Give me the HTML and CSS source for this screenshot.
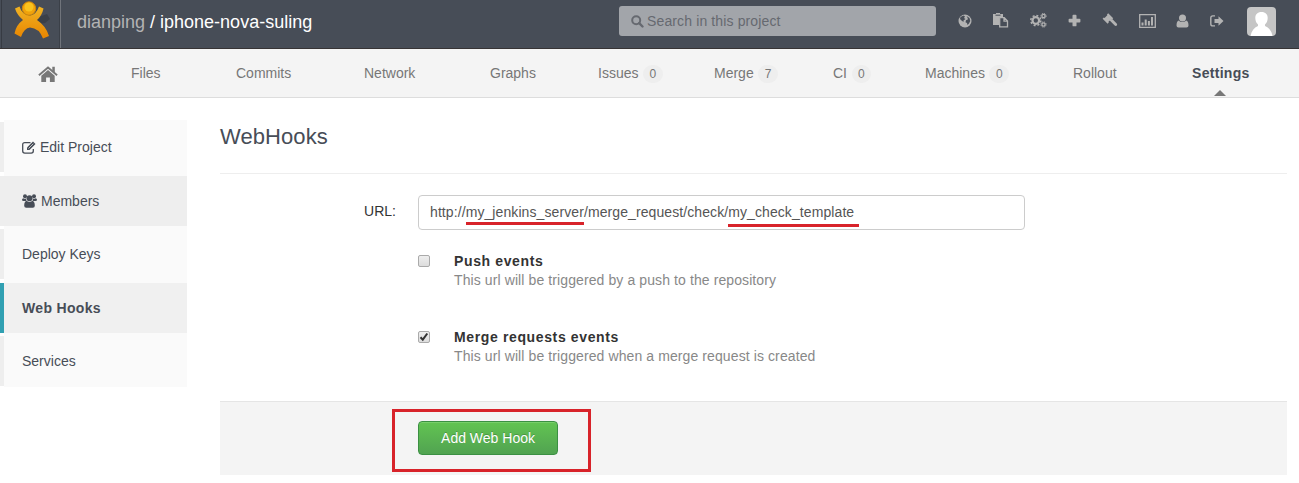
FILE: index.html
```html
<!DOCTYPE html>
<html lang="en">
<head>
<meta charset="utf-8">
<title>WebHooks</title>
<link rel="stylesheet" href="styles.css">
</head>
<body>
<header class="topbar">
  <a class="logo">
    <svg width="48" height="42" viewBox="0 0 48 42">
      <defs><linearGradient id="g" x1="0" y1="0" x2="0" y2="1"><stop offset="0" stop-color="#f0b323"/><stop offset="1" stop-color="#e88500"/></linearGradient></defs>
      <path d="M29 18l11-4 3 5-5 4-8 1z" fill="#343941" opacity=".65"/>
      <path d="M8 8.500l4.500-2Q15 15 23 15.500Q29 15 32 6.500l4.500 2Q35 15.500 30 20Q39 26 42 36l-6 2.500Q32 28 23 27.500Q17 28 14 37L7.500 33.500Q9 25 16 20Q10 15 8 8.500z" fill="url(#g)"/>
      <circle cx="22" cy="8.500" r="6.700" fill="#f0a20c" stroke="#cf8608"/>
      <circle cx="22" cy="7" r="4.500" fill="#f9c21d"/>
    </svg>
  </a>
  <h1 class="title"><span class="group">dianping</span> / iphone-nova-suling</h1>
  <div class="search">
    <svg width="13" height="13" viewBox="0 0 13 13"><circle cx="5.200" cy="5.200" r="4" fill="none" stroke="#666970" stroke-width="2"/><path d="M8.200 8.200l3.300 3.300" stroke="#666970" stroke-width="2.400" stroke-linecap="round"/></svg>
    <span>Search in this project</span>
  </div>
  <nav class="tools">
    <svg width="14" height="14" viewBox="0 0 14 14"><circle cx="7" cy="7" r="6.500" fill="#b3b3b3"/><path d="M2.500 3l3-1.500 1.500 1-1 1.500 1.500 1-2 1.500 0 1.500-2-1.500L2 5zM8.500 2l3 2 .8 3-1.300 2.500-1.500 1.500-.5-2-1.500-.8.500-2 2-1-.5-1.500z" fill="#474d57"/></svg>
    <svg width="16" height="15" viewBox="0 0 16 15"><path d="M0 1h3V0h4v1h3v3H6v8H0z" fill="#b3b3b3"/><path d="M2.500 2.200h5" stroke="#474d57"/><path d="M6.700 4.700h4.600l3.200 3.200v5.900H6.700zM11 4.700v3.500h3.500" fill="none" stroke="#b3b3b3" stroke-width="1.300"/></svg>
    <svg width="17" height="15" viewBox="0 0 17 15"><g fill="none" stroke="#b3b3b3"><circle cx="5.800" cy="7.500" r="3.300" stroke-width="2.200"/><circle cx="5.800" cy="7.500" r="5" stroke-width="1.500" stroke-dasharray="2 1.927"/><circle cx="13.500" cy="3" r="1.600" stroke-width="1.300"/><circle cx="13.500" cy="3" r="2.600" stroke-dasharray="1.200 .842"/><circle cx="13.500" cy="11.500" r="1.600" stroke-width="1.300"/><circle cx="13.500" cy="11.500" r="2.600" stroke-dasharray="1.200 .842"/></g></svg>
    <svg width="13" height="13" viewBox="0 0 13 13"><path d="M5.400.8h2.200q.9 0 .9.900v3h3q.9 0 .9.900v1.900q0 .9-.9.900h-3v3q0 .9-.9.900H5.400q-.9 0-.9-.9v-3h-3q-.9 0-.9-.9V5.600q0-.9.900-.9h3v-3q0-.9.900-.9z" fill="#b3b3b3"/></svg>
    <svg width="16" height="15" viewBox="0 0 16 15"><path d="M6.200.2l5 5-1.200 1.200-.8-.3-2.700 2.700.3.800-1.200 1.200-5-5 1.200-1.200.8.300 2.700-2.700-.3-.8zM7.700 7.600l2.100-2.100 4.900 4.900q1 1 0 2t-2 .1z" fill="#b3b3b3"/></svg>
    <svg width="17" height="14" viewBox="0 0 17 14"><path d="M.7.700h15.600v12.600H.7z" fill="none" stroke="#b3b3b3" stroke-width="1.300"/><path d="M2.500 8.500h2v3h-2zM5.700 5.500h2v6h-2zM8.900 7h2v4.500h-2zM12 3h2v8.500h-2z" fill="#b3b3b3"/></svg>
    <svg width="13" height="14" viewBox="0 0 13 14"><path d="M2.500 6.500Q6 9.500 10.500 6.500 12.500 7.500 12.500 11.500 12.500 13.500 10.500 13.500h-8Q.5 13.500.5 11.500.5 7.500 2.500 6.500z" fill="#b3b3b3"/><circle cx="6.500" cy="4" r="3.500" fill="#b3b3b3"/></svg>
    <svg width="14" height="12" viewBox="0 0 14 12"><path d="M5 .9H2.800Q.8.900.8 2.900v6q0 2 2 2H5" fill="none" stroke="#b3b3b3" stroke-width="1.400"/><path d="M4.500 4H8.500V1.200l5 4.700-5 4.800V8h-4z" fill="#b3b3b3"/></svg>
  </nav>
  <svg class="avatar" width="29" height="29" viewBox="0 0 29 29"><path d="M0 0h29v29H0z" fill="#c5c5c5"/><path d="M14.500 5c4 0 6.200 2.500 6.200 6 0 3-1.200 5.200-2.700 6.500v1.500c4 1.500 6.500 5 7.500 10h-22c1-5 3.500-8.500 7.500-10v-1.500C9.500 16.200 8.300 14 8.300 11c0-3.500 2.200-6 6.200-6z" fill="#fff"/></svg>
</header>
<nav class="mainnav">
  <a class="home"><svg width="20" height="17" viewBox="0 0 20 17"><path d="M.9 9.300L10 1.600l9.100 7.700" fill="none" stroke="#777" stroke-width="1.900"/><path d="M14.300.8h2.500v6l-2.500-2zM3.300 9.700L10 4l6.700 5.700V16h-4.800v-4.600H8.100V16H3.300z" fill="#777"/></svg></a>
  <a>Files</a>
  <a>Commits</a>
  <a>Network</a>
  <a>Graphs</a>
  <a>Issues<span class="count">0</span></a>
  <a>Merge<span class="count">7</span></a>
  <a>CI<span class="count">0</span></a>
  <a>Machines<span class="count">0</span></a>
  <a>Rollout</a>
  <a class="active">Settings</a>
</nav>
<main class="page">
  <ul class="side">
    <li><svg width="14" height="13" viewBox="0 0 14 13"><path d="M8.500 1.600H2.800Q.7 1.600.7 3.700v6.400q0 2.100 2.100 2.100h6.400q2.100 0 2.100-2.100V8" fill="none" stroke="#474d57" stroke-width="1.300"/><path d="M11 .5l2.500 2.500-6 6H5V6.500z" fill="#474d57"/><path d="M6.500 7.500l4.800-4.800" stroke="#fafafa" stroke-width=".7"/></svg><span>Edit Project</span></li>
    <li class="hover"><svg width="15" height="14" viewBox="0 0 15 14"><g fill="#474d57"><circle cx="3" cy="2.200" r="2"/><circle cx="12" cy="2.200" r="2"/><circle cx="7.500" cy="4.300" r="3"/><path d="M1.500 4.300Q3 5.300 4 4.500q0 1.500.7 2.500H1.500Q0 7 0 5.800T1.500 4.300zM13.500 4.300Q12 5.300 11 4.500q0 1.500-.7 2.500h3.200Q15 7 15 5.800t-1.500-1.500zM4.300 6.800q3.200 2.200 6.400 0Q12.800 7.700 12.800 11.700q0 2-2 2H4.200q-2 0-2-2 0-4 2.100-4.900z"/></g></svg><span>Members</span></li>
    <li>Deploy Keys</li>
    <li class="current">Web Hooks</li>
    <li>Services</li>
  </ul>
  <section class="content">
    <h3>WebHooks</h3>
    <form>
      <div class="url-row">
        <label>URL:</label>
        <div class="field">http://<span class="mark m1">my_jenkins_server</span>/merge_request/check/<span class="mark m2">my_check_template</span></div>
      </div>
      <div class="option">
        <span class="box"></span>
        <div><strong>Push events</strong><p>This url will be triggered by a push to the repository</p></div>
      </div>
      <div class="option">
        <span class="box"><svg width="10" height="10" viewBox="0 0 10 10"><path d="M1.500 5.200l2.300 2.500L8.300 1.500" fill="none" stroke="#333" stroke-width="2"/></svg></span>
        <div><strong>Merge requests events</strong><p>This url will be triggered when a merge request is created</p></div>
      </div>
      <div class="actions"><div class="callout"><span class="btn">Add Web Hook</span></div></div>
    </form>
  </section>
</main>
</body>
</html>
```
FILE: styles.css
```css
* { box-sizing: border-box; }
body { margin: 0; background: #fff; color: #333; font: 14px/20px "Liberation Sans", Arial, sans-serif; overflow: hidden; }
svg { display: block; flex: none; }
h1, h3, p, ul { margin: 0; padding: 0; }
.topbar { display: flex; height: 49px; background: #474d57; border-bottom: 1px solid #373435; }
.logo { width: 60px; height: 48px; margin-left: 1px; border-left: 1px solid #373b43; border-right: 1px solid #70747b; padding-left: 5px; box-shadow: inset -1px 0 #3b4048; }
.title { width: 558px; padding: 11px 0 0 16px; font-size: 18px; line-height: 22px; font-weight: normal; color: #fff; white-space: nowrap; }
.group { color: #b3b3b3; }
.search { display: flex; align-items: center; gap: 3px; width: 317px; height: 30px; margin-top: 6px; padding-left: 12px; border-radius: 3px; background: #a2a5aa; color: #666970; letter-spacing: .13px; }
.tools { display: grid; grid-template-columns: 35px 37px 38px 34px 37px 37px 34px 37px; align-items: center; height: 41px; margin-left: 22px; }
.avatar { margin-top: 7px; border-radius: 4px; }
.mainnav { display: grid; grid-template-columns: 93px 105px 128px 126px 108px 116px 119px 92px 148px 119px 107px; height: 49px; padding-left: 38px; background: #f4f4f4; border-bottom: 1px solid #ddd; color: #777; line-height: 48px; white-space: nowrap; }
.home { padding-top: 17px; }
.count { margin-left: 4.500px; padding: 2px 6.500px; border-radius: 9px; background: #eee; font-size: 12px; }
.active { position: relative; color: #474d57; font-weight: bold; letter-spacing: .3px; }
.active::after { content: ""; position: absolute; left: 22px; bottom: 2px; border: 6px solid transparent; border-top: 0; border-bottom-color: #777; }
.page { display: flex; }
.side { display: flex; flex-direction: column; gap: 3.5px; width: 187px; height: 267px; margin: 22px 33px 0 0; padding-top: 2.150px; list-style: none; background: linear-gradient(90deg, #fff 4px, #fafafa 4px); color: #474d57; }
.side li { display: flex; align-items: center; gap: 4px; height: 50px; padding-left: 18px; border-left: 4px solid #eee; }
.side .hover { background: #eee; }
.side .current { background: #f0f0f0; border-left-color: #31a0b2; font-weight: bold; letter-spacing: .32px; }
.content { width: 1067px; padding-top: 23px; }
.content h3 { height: 53px; padding-top: 1px; border-bottom: 1px solid #eee; font-size: 22px; line-height: 30px; font-weight: normal; color: #474d57; letter-spacing: .08px; }
.url-row { display: flex; margin: 21px 0 21px; }
.url-row label { width: 198px; padding: 6px 22px 0 0; text-align: right; }
.field { width: 607px; height: 35px; padding-left: 11px; border: 1px solid #ccc; border-radius: 4px; line-height: 33px; color: #555; white-space: pre; letter-spacing: .09px; }
.mark { position: relative; }
.mark::after { content: ""; position: absolute; left: 0; height: 3px; background: #d8232a; }
.m1::after { top: 18px; width: 118px; }
.m2::after { top: 20px; left: 0; width: 131px; }
.option { display: flex; gap: 24px; height: 76px; padding-left: 198px; }
.box { width: 12px; height: 12px; margin-top: 4px; border: 1px solid #aaa; border-radius: 2px; background: linear-gradient(#eee, #ddd); }
.option strong { display: block; line-height: 20px; letter-spacing: .63px; }
.option p { line-height: 18px; color: #888; letter-spacing: .1px; }
.actions { height: 74px; margin-top: -2px; padding: 7px 0 0 172px; border-top: 1px solid #e5e5e5; background: #f4f4f4; }
.callout { width: 199px; height: 63px; border: 3px solid #d8232a; padding: 9px 23px; }
.btn { display: block; width: 140px; height: 34px; border: 1px solid #3b9043; border-radius: 4px; background: linear-gradient(#62c452, #51a351); box-shadow: inset 0 1px #78cf6b; color: #fff; text-align: center; line-height: 32px; text-shadow: 0 -1px rgba(0,0,0,.2); }
```
